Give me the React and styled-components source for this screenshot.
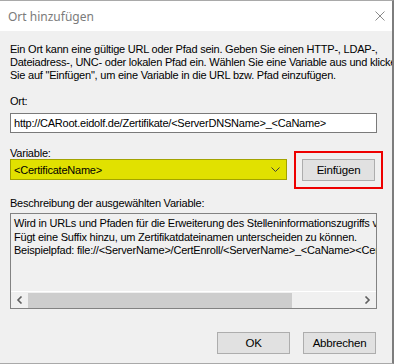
import React from "react";
import styled, { createGlobalStyle } from "styled-components";

const GlobalStyle = createGlobalStyle`
  html, body {
    margin: 0;
    padding: 0;
    background: #ffffff;
  }
  * {
    box-sizing: border-box;
  }
`;

const descriptionLines = [
  "Wird in URLs und Pfaden für die Erweiterung des Stelleninformationszugriffs verwendet.",
  "Fügt eine Suffix hinzu, um Zertifikatdateinamen unterscheiden zu können.",
  "Beispielpfad: file://<ServerName>/CertEnroll/<ServerName>_<CaName><CertificateName>.crt",
];

const App = () => {
  return (
    <>
      <GlobalStyle />
      <Window>
        <TitleBar>
          <Title>Ort hinzufügen</Title>
          <CloseIcon viewBox="0 0 10 10">
            <path d="M0.5 0.5 L9.5 9.5 M9.5 0.5 L0.5 9.5" />
          </CloseIcon>
        </TitleBar>
        <Body>
          <Intro>
            Ein Ort kann eine gültige URL oder Pfad sein. Geben Sie einen HTTP-, LDAP-,
            <br />
            Dateiadress-, UNC- oder lokalen Pfad ein. Wählen Sie eine Variable aus und klicken
            <br />
            Sie auf "Einfügen", um eine Variable in die URL bzw. Pfad einzufügen.
          </Intro>

          <Label $top={13} $bottom={5}>Ort:</Label>
          <TextInput>http://CARoot.eidolf.de/Zertifikate/&lt;ServerDNSName&gt;_&lt;CaName&gt;</TextInput>

          <Label $top={14} $bottom={-1}>Variable:</Label>
          <VariableRow>
            <Select>
              <span>&lt;CertificateName&gt;</span>
              <Chevron viewBox="0 0 9 5">
                <path d="M0.5 0.5 L4.5 4.5 L8.5 0.5" />
              </Chevron>
            </Select>
            <Highlight>
              <Button>Einfügen</Button>
            </Highlight>
          </VariableRow>

          <Label $top={16} $bottom={3}>Beschreibung der ausgewählten Variable:</Label>
          <Description>
            <DescriptionText>
              {descriptionLines.map((line, i) => (
                <div key={i}>{line}</div>
              ))}
            </DescriptionText>
            <ScrollBar>
              <Arrow viewBox="0 0 6 8">
                <path d="M5 0.5 L1.5 4 L5 7.5" />
              </Arrow>
              <Track>
                <Thumb />
              </Track>
              <Arrow viewBox="0 0 6 8">
                <path d="M1 0.5 L4.5 4 L1 7.5" />
              </Arrow>
            </ScrollBar>
          </Description>

          <Footer>
            <Button>OK</Button>
            <Button>Abbrechen</Button>
          </Footer>
        </Body>
      </Window>
    </>
  );
};

export default App;

const Window = styled.div`
  width: 394px;
  height: 364px;
  display: flex;
  flex-direction: column;
  border-top: 1px solid #a9a9a9;
  border-right: 2px solid #7d7d7d;
  border-bottom: 1px solid #a9a9a9;
  background: #f0f0f0;
  font-family: "Liberation Sans", Arial, sans-serif;
  font-size: 11px;
  letter-spacing: -0.22px;
  color: #000;
  overflow: hidden;
`;

const TitleBar = styled.div`
  height: 30px;
  background: #ffffff;
  display: flex;
  align-items: center;
  justify-content: space-between;
  padding: 0 7px 0 8px;
`;

const Title = styled.span`
  font-family: "Noto Sans", "Open Sans", sans-serif;
  font-size: 12px;
  letter-spacing: 0;
  color: #7b7b7b;
`;

const CloseIcon = styled.svg`
  width: 10px;
  height: 10px;
  stroke: #8a8a8a;
  stroke-width: 1;
  fill: none;
`;

const Body = styled.div`
  flex: 1;
  display: flex;
  flex-direction: column;
  padding: 12px 15px 0 10px;
`;

const Intro = styled.div`
  line-height: 13px;
  white-space: nowrap;
`;

const Label = styled.div`
  margin-top: ${(p) => p.$top}px;
  margin-bottom: ${(p) => p.$bottom}px;
  line-height: 13px;
`;

const TextInput = styled.div`
  height: 20px;
  background: #fff;
  border: 1px solid #7a7a7a;
  padding: 0 3px;
  display: flex;
  align-items: center;
  white-space: nowrap;
  overflow: hidden;
`;

const VariableRow = styled.div`
  display: flex;
  align-items: flex-start;
  gap: 15px;
`;

const Select = styled.div`
  width: 277px;
  height: 21px;
  background: #e1e100;
  border: 1px solid #a3a300;
  padding: 0 6px 0 3px;
  display: flex;
  align-items: center;
  justify-content: space-between;
`;

const Chevron = styled.svg`
  width: 9px;
  height: 5px;
  stroke: #404040;
  stroke-width: 1;
  fill: none;
`;

const Highlight = styled.div`
  outline: 2px solid #ee0000;
  outline-offset: 6px;
  display: flex;
`;

const Button = styled.div`
  width: 73px;
  height: 22px;
  background: #e1e1e1;
  border: 1px solid #adadad;
  display: flex;
  align-items: center;
  justify-content: center;
  font-size: 11.5px;
`;

const Description = styled.div`
  height: 96px;
  border: 1px solid #828282;
  display: flex;
  flex-direction: column;
  overflow: hidden;
`;

const DescriptionText = styled.div`
  flex: 1;
  padding: 3px 0 0 3px;
  line-height: 13.5px;
  white-space: nowrap;
  overflow: hidden;
`;

const ScrollBar = styled.div`
  height: 17px;
  display: flex;
  align-items: center;
  border-top: 1px solid #ffffff;
`;

const Arrow = styled.svg`
  width: 17px;
  height: 8px;
  stroke: #606060;
  stroke-width: 1.6;
  fill: none;
`;

const Track = styled.div`
  flex: 1;
  height: 100%;
  display: flex;
  align-items: center;
`;

const Thumb = styled.div`
  width: 264px;
  height: 15px;
  background: #cdcdcd;
`;

const Footer = styled.div`
  margin-top: 23px;
  display: flex;
  justify-content: flex-end;
  gap: 13px;
  padding-right: 1px;
`;
